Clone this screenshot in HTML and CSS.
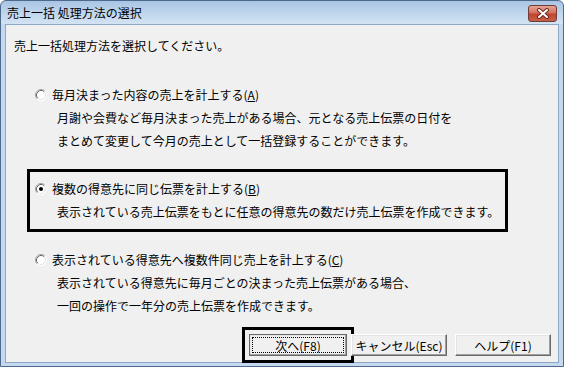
FILE: index.html
```html
<!DOCTYPE html>
<html lang="ja">
<head>
    <meta charset="UTF-8">
    <title>売上一括 処理方法の選択</title>
    <link rel="stylesheet" href="styles.css">
</head>
<body>
    <div class="window">
        <div class="titlebar">
            <span class="title">売上一括 処理方法の選択</span>
            <span class="close-btn">
                <svg width="14" height="11" viewBox="0 0 14 11">
                    <path d="M3 2 L11 9 M11 2 L3 9" stroke="#6b2a20" stroke-width="4" stroke-linecap="round"/>
                    <path d="M3 2 L11 9 M11 2 L3 9" stroke="#fff" stroke-width="2" stroke-linecap="round"/>
                </svg>
            </span>
        </div>

        <div class="client">
            <p class="prompt">売上一括処理方法を選択してください。</p>

            <div class="option">
                <div class="option-label">
                    <svg class="radio" width="12" height="12" viewBox="0 0 12 12">
                        <circle cx="6" cy="6" r="5.5" fill="#fff"/>
                        <path d="M2.11 9.89 A5.5 5.5 0 0 1 9.89 2.11" fill="none" stroke="#a0a0a0"/>
                        <path d="M2.82 9.18 A4.5 4.5 0 0 1 9.18 2.82" fill="none" stroke="#696969"/>
                        <path d="M9.89 2.11 A5.5 5.5 0 0 1 2.11 9.89" fill="none" stroke="#ffffff"/>
                        <path d="M9.18 2.82 A4.5 4.5 0 0 1 2.82 9.18" fill="none" stroke="#e3e3e3"/>
                    </svg>
                    <span>毎月決まった内容の売上を計上する(<u>A</u>)</span>
                </div>
                <div class="option-desc">月謝や会費など毎月決まった売上がある場合、元となる売上伝票の日付を</div>
                <div class="option-desc">まとめて変更して今月の売上として一括登録することができます。</div>
            </div>

            <div class="option selected">
                <div class="option-label">
                    <svg class="radio" width="12" height="12" viewBox="0 0 12 12">
                        <circle cx="6" cy="6" r="5.5" fill="#fff"/>
                        <path d="M2.11 9.89 A5.5 5.5 0 0 1 9.89 2.11" fill="none" stroke="#a0a0a0"/>
                        <path d="M2.82 9.18 A4.5 4.5 0 0 1 9.18 2.82" fill="none" stroke="#696969"/>
                        <path d="M9.89 2.11 A5.5 5.5 0 0 1 2.11 9.89" fill="none" stroke="#ffffff"/>
                        <path d="M9.18 2.82 A4.5 4.5 0 0 1 2.82 9.18" fill="none" stroke="#e3e3e3"/>
                        <circle cx="6" cy="6" r="2" fill="#000"/>
                    </svg>
                    <span>複数の得意先に同じ伝票を計上する(<u>B</u>)</span>
                </div>
                <div class="option-desc">表示されている売上伝票をもとに任意の得意先の数だけ売上伝票を作成できます。</div>
            </div>

            <div class="option">
                <div class="option-label">
                    <svg class="radio" width="12" height="12" viewBox="0 0 12 12">
                        <circle cx="6" cy="6" r="5.5" fill="#fff"/>
                        <path d="M2.11 9.89 A5.5 5.5 0 0 1 9.89 2.11" fill="none" stroke="#a0a0a0"/>
                        <path d="M2.82 9.18 A4.5 4.5 0 0 1 9.18 2.82" fill="none" stroke="#696969"/>
                        <path d="M9.89 2.11 A5.5 5.5 0 0 1 2.11 9.89" fill="none" stroke="#ffffff"/>
                        <path d="M9.18 2.82 A4.5 4.5 0 0 1 2.82 9.18" fill="none" stroke="#e3e3e3"/>
                    </svg>
                    <span>表示されている得意先へ複数件同じ売上を計上する(<u>C</u>)</span>
                </div>
                <div class="option-desc">表示されている得意先に毎月ごとの決まった売上伝票がある場合、</div>
                <div class="option-desc">一回の操作で一年分の売上伝票を作成できます。</div>
            </div>

            <div class="buttons">
                <button class="btn btn-default"><span class="focus-rect">次へ(F8)</span></button>
                <button class="btn btn-cancel">キャンセル(Esc)</button>
                <button class="btn btn-help">ヘルプ(F1)</button>
            </div>
        </div>
    </div>
</body>
</html>
```

FILE: styles.css
```css
* {
    box-sizing: border-box;
}
body {
    margin: 0;
    font-family: "Noto Sans CJK JP", "Noto Sans", sans-serif;
    font-size: 12px;
    color: #000;
    background: #fff;
}
.window {
    width: 564px;
    height: 367px;
    display: flex;
    flex-direction: column;
    border: 1px solid #4d6a8c;
    border-radius: 6px 6px 0 0;
    padding: 0 4px 3px;
    background: linear-gradient(to bottom, #a9c5e4 0, #c3d8ee 14px, #d3e3f4 23px, #c4d9ef 23px);
}
.titlebar {
    height: 23px;
    display: flex;
    justify-content: space-between;
    align-items: flex-start;
    padding-left: 2px;
}
.title {
    line-height: 24px;
    font-size: 12px;
}
.close-btn {
    width: 29px;
    height: 17px;
    margin-top: 4px;
    margin-right: 2px;
    border: 1px solid #6e3b35;
    border-radius: 3px;
    background: linear-gradient(to bottom, #e6a596 0, #d4705d 45%, #c0432c 55%, #c9604a 100%);
    display: flex;
    align-items: center;
    justify-content: center;
}
.client {
    flex: 1;
    display: flex;
    flex-direction: column;
    background: #f0f0f0;
    border: 1px solid #8ea9c8;
    padding: 9px 7px 6px 8px;
}
.prompt {
    margin: 0 0 17px;
    line-height: 24px;
}
.option {
    width: 481px;
    margin-left: 13px;
    margin-bottom: 8px;
    border: 3px solid transparent;
    padding: 5px 6px 6px 5px;
    line-height: 23px;
    white-space: nowrap;
}
.option.selected {
    border-color: #000;
}
.option-label {
    display: flex;
    align-items: center;
    gap: 5px;
}
.radio {
    flex: none;
}
.option-desc {
    padding-left: 22px;
}
.buttons {
    margin-top: auto;
    display: flex;
    justify-content: flex-end;
}
.btn {
    height: 22px;
    width: 96px;
    padding: 0;
    font-family: inherit;
    font-size: 12px;
    color: #000;
    background: #f0f0f0;
    border: 1px solid;
    border-color: #fff #696969 #696969 #fff;
    box-shadow: inset -1px -1px #a0a0a0, inset 1px 1px #e3e3e3;
}
.btn-default {
    width: 98px;
    padding: 2px;
    border-color: #696969;
    outline: 3px solid #000;
    outline-offset: 4px;
}
.focus-rect {
    display: flex;
    align-items: center;
    justify-content: center;
    height: 100%;
    border: 1px dotted #000;
}
.btn-cancel {
    margin-left: 4px;
}
.btn-help {
    margin-left: 8px;
}
```
